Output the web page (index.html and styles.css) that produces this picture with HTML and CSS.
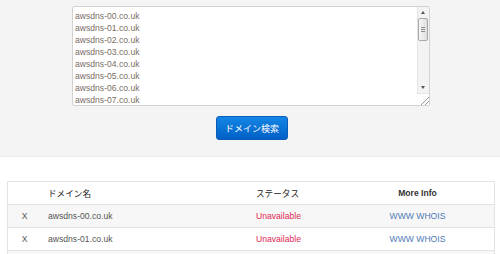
FILE: index.html
```html
<!DOCTYPE html>
<html lang="ja">
<head>
  <meta charset="UTF-8">
  <title>ドメイン検索</title>
  <link rel="stylesheet" href="styles.css">
</head>
<body>
  <div class="search">
    <div class="box">
      <textarea class="domains" rows="8">awsdns-00.co.uk
awsdns-01.co.uk
awsdns-02.co.uk
awsdns-03.co.uk
awsdns-04.co.uk
awsdns-05.co.uk
awsdns-06.co.uk
awsdns-07.co.uk
awsdns-08.co.uk
awsdns-09.co.uk
awsdns-10.co.uk
awsdns-11.co.uk
awsdns-12.co.uk
awsdns-13.co.uk
awsdns-14.co.uk
awsdns-15.co.uk
awsdns-16.co.uk
awsdns-17.co.uk
awsdns-18.co.uk
awsdns-19.co.uk
awsdns-20.co.uk
awsdns-21.co.uk
awsdns-22.co.uk</textarea>
      <div class="scroll">
        <div class="arrow arrow-up"></div>
        <div class="thumb"><span></span><span></span><span></span></div>
        <div class="track"></div>
        <div class="arrow arrow-down"></div>
        <div class="grip"></div>
      </div>
    </div>
    <button class="btn">ドメイン検索</button>
  </div>

  <div class="results">
    <table class="result-table">
      <thead>
        <tr>
          <th class="c-x"></th>
          <th class="c-name">ドメイン名</th>
          <th class="c-status">ステータス</th>
          <th class="c-info">More Info</th>
        </tr>
      </thead>
      <tbody>
        <tr>
          <td class="c-x">X</td>
          <td class="c-name">awsdns-00.co.uk</td>
          <td class="c-status"><span class="bad">Unavailable</span></td>
          <td class="c-info"><a href="#">WWW</a> <a href="#">WHOIS</a></td>
        </tr>
        <tr>
          <td class="c-x">X</td>
          <td class="c-name">awsdns-01.co.uk</td>
          <td class="c-status"><span class="bad">Unavailable</span></td>
          <td class="c-info"><a href="#">WWW</a> <a href="#">WHOIS</a></td>
        </tr>
        <tr class="next">
          <td colspan="4"></td>
        </tr>
      </tbody>
    </table>
  </div>
</body>
</html>
```

FILE: styles.css
```css
body {
  margin: 0;
  background: #ffffff;
  font-family: "Liberation Sans", Arial, "Noto Sans CJK JP", sans-serif;
  font-size: 8.6px;
  color: #555555;
}

.search {
  background: #f4f4f4;
  border-bottom: 1px solid #ebebeb;
  padding: 6px 0 16px 0;
  display: flex;
  flex-direction: column;
  align-items: center;
  gap: 10px;
}

/* textarea + drawn scrollbar */
.box {
  box-sizing: border-box;
  width: 358px;
  height: 100px;
  margin-left: 2px;
  display: flex;
  border: 1px solid #d2d2d2;
  border-radius: 2px;
  background: #ffffff;
}

.domains {
  flex: 1;
  margin: 0;
  padding: 3px 2px;
  border: none;
  outline: none;
  background: transparent;
  font-family: "Liberation Sans", Arial, sans-serif;
  font-size: 8.6px;
  line-height: 12px;
  color: #7a6d64;
  resize: none;
  overflow: hidden;
}

.scroll {
  width: 11px;
  display: flex;
  flex-direction: column;
  background: #f3f3f3;
  border-left: 1px solid #e4e4e4;
}

.arrow {
  height: 11px;
  position: relative;
}

.arrow::after {
  content: "";
  position: absolute;
  left: 3px;
  top: 4px;
  border-left: 2.5px solid transparent;
  border-right: 2.5px solid transparent;
}

.arrow-up::after {
  border-bottom: 3px solid #555555;
}

.arrow-down::after {
  border-top: 3px solid #555555;
}

.thumb {
  height: 23px;
  margin: 0 1px 0 0;
  box-sizing: border-box;
  border: 1px solid #a8a8a8;
  border-radius: 2px;
  background: linear-gradient(to right, #f7f7f7, #dedede);
  display: flex;
  flex-direction: column;
  justify-content: center;
  align-items: center;
  gap: 1px;
}

.thumb span {
  width: 4px;
  height: 1px;
  background: #8c8c8c;
}

.track {
  flex: 1;
}

.grip {
  height: 11px;
  margin-left: -1px;
  background:
    linear-gradient(135deg, transparent 62%, #9a9a9a 62%, #9a9a9a 68%, transparent 68%, transparent 80%, #9a9a9a 80%, #9a9a9a 86%, transparent 86%),
    #ffffff;
  border-top: 1px solid #e4e4e4;
}

.btn {
  width: 72px;
  height: 24px;
  margin-left: 4px;
  border: 1px solid #0a5cb8;
  border-radius: 3px;
  background: linear-gradient(to bottom, #1486e6, #0060c6);
  color: #ffffff;
  font-family: "Noto Sans CJK JP", sans-serif;
  font-size: 9px;
  padding: 0;
}

.results {
  padding: 24px 5px 0 7px;
}

.result-table {
  width: 100%;
  border-collapse: collapse;
  border: 1px solid #e3e3e3;
  table-layout: fixed;
}

.result-table th,
.result-table td {
  height: 22px;
  padding: 0 7px;
  text-align: left;
  border-top: 1px solid #e3e3e3;
  white-space: nowrap;
}

.result-table th {
  color: #333333;
  font-weight: bold;
}

.result-table th.c-name,
.result-table th.c-status {
  font-family: "Noto Sans CJK JP", sans-serif;
  font-weight: normal;
  color: #222222;
}

.result-table tbody tr:nth-child(odd) {
  background: #f7f7f7;
}

.c-x {
  width: 19px;
  text-align: center !important;
}

.c-name {
  width: 194px;
}

.c-status {
  width: 78px;
}

.c-info {
  text-align: center !important;
}

.bad {
  color: #dd2a55;
}

.c-info a {
  color: #4d79b6;
  text-decoration: none;
}
```
